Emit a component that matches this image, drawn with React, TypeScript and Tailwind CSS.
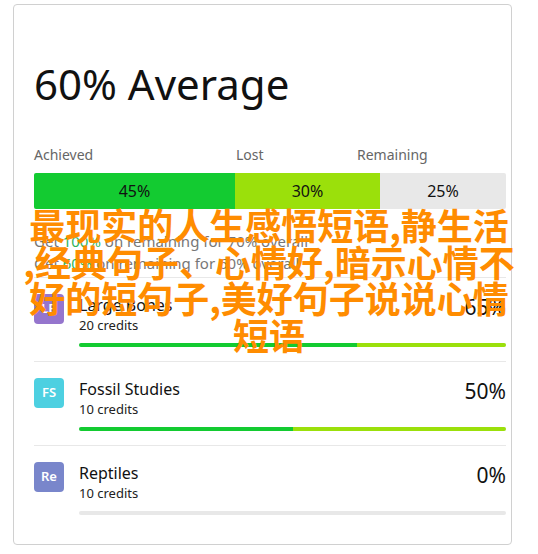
import React from 'react';

type Course = {
  code: string;
  name: string;
  credits: number;
  achieved: number;
  lost: number;
  color: string;
};

const courses: Course[] = [
  { code: 'LB', name: 'Large Bones', credits: 20, achieved: 65, lost: 35, color: 'bg-[#9575cd]' },
  { code: 'FS', name: 'Fossil Studies', credits: 10, achieved: 50, lost: 50, color: 'bg-[#4dd0e1]' },
  { code: 'Re', name: 'Reptiles', credits: 10, achieved: 0, lost: 0, color: 'bg-[#7986cb]' },
];

const sans = { fontFamily: '"Noto Sans", "Open Sans", sans-serif' };

function CourseRow({ course }: { course: Course }) {
  return (
    <div className="flex border-t border-[#e8e8e8] pt-[16px] pb-[14px]">
      <div
        className={`w-[30px] h-[30px] rounded-[4px] ${course.color} flex items-center justify-center text-white text-[13px] font-semibold`}
      >
        {course.code}
      </div>
      <div className="flex-1 ml-[15px]">
        <div className="flex items-start justify-between h-[22px]">
          <div className="text-[16px] leading-[22px] text-[#111]">{course.name}</div>
          <div className="text-[21px] leading-[24px] mt-[1px] text-[#111]">{course.achieved}%</div>
        </div>
        <div className="text-[13px] leading-[18px] text-[#222]">{course.credits} credits</div>
        <div className="flex h-[4px] mt-[9px] rounded-full overflow-hidden bg-[#e8e8e8]">
          <div className="bg-[#13cb31]" style={{ width: `${course.achieved}%` }} />
          <div className="bg-[#9be00b]" style={{ width: `${course.lost}%` }} />
        </div>
      </div>
    </div>
  );
}

export default function App() {
  return (
    <div className="relative w-[538px] h-[554px] bg-white overflow-hidden" style={sans}>
      <div className="absolute left-[13px] top-[4px] w-[499px] h-[541px] border border-[#d0d0d0] rounded-[4px] bg-white" />
      <div className="relative pl-[34px] pr-[32px] pt-[54px]">
        {/* Header */}
        <h1 className="text-[42px] leading-[60px] text-[#111]">60% Average</h1>

        <div className="flex mt-[31px] text-[14px] leading-[20px] text-[#666]">
          <div className="w-[202px]">Achieved</div>
          <div className="w-[121px]">Lost</div>
          <div>Remaining</div>
        </div>
        <div className="flex h-[36px] mt-[8px] rounded-[2px] overflow-hidden text-[16px] text-[#111]">
          <div className="w-[201px] bg-[#13cb31] flex items-center justify-center">45%</div>
          <div className="w-[145px] bg-[#9be00b] flex items-center justify-center">30%</div>
          <div className="flex-1 bg-[#e8e8e8] flex items-center justify-center">25%</div>
        </div>

        <div className="mt-[21px] mb-[3px] text-[15px] leading-[22px] text-[#777]">
          <div>
            Get <span className="text-[#2fb45a]">100%</span> on remaining for 70% overall
          </div>
          <div>
            Get <span className="text-[#2fb45a]">60%</span> on remaining for 60% overall
          </div>
        </div>

        {/* Courses */}
        <div>
          {courses.map((c) => (
            <CourseRow key={c.code} course={c} />
          ))}
        </div>
      </div>

      {/* Overlay caption */}
      <div
        className="absolute left-0 top-[206px] w-full text-center text-[36px] leading-[36.5px] font-bold text-[#ff8c00] whitespace-nowrap"
        style={{ fontFamily: '"Noto Sans CJK SC", sans-serif' }}
      >
        <div>最现实的人生感悟短语,静生活</div>
        <div>,经典句子、心情好,暗示心情不</div>
        <div>好的短句子,美好句子说说心情</div>
        <div>短语</div>
      </div>
    </div>
  );
}
